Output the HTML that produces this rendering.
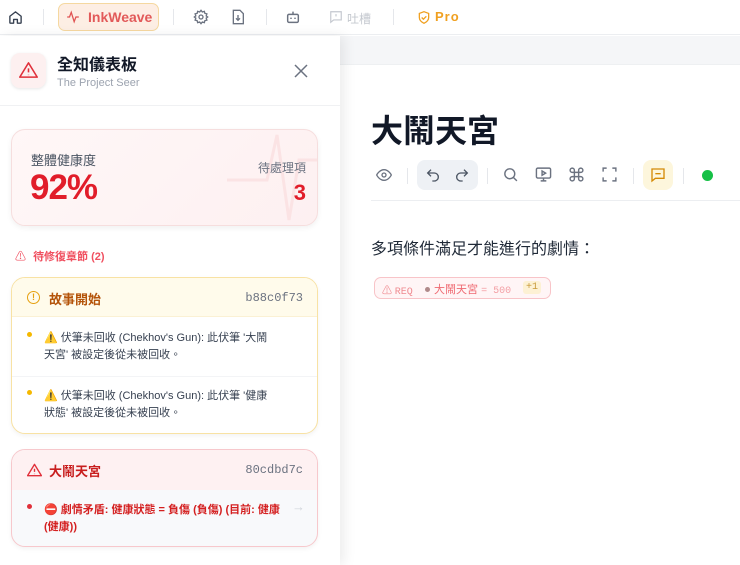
<!DOCTYPE html>
<html><head><meta charset="utf-8"><style>
*{box-sizing:border-box;margin:0;padding:0}
body{width:740px;height:565px;overflow:hidden;background:#fff;font-family:"Liberation Sans","Noto Sans CJK TC",sans-serif;position:relative;color:#1f2937}
.top{position:absolute;left:0;top:0;width:740px;height:35px;background:#fff;border-bottom:1px solid #eceef1}
.ab{position:absolute}
.sep{position:absolute;top:9px;width:1px;height:16px;background:#e5e7eb}
.mono{font-family:"Liberation Mono",monospace}
.right{position:absolute;left:340px;top:36px;right:0;bottom:0;background:#fff}
.strip{position:absolute;left:0;top:0;right:0;height:29px;background:#f5f6f8;border-bottom:1px solid #eef0f2}
.panel{position:absolute;left:0;top:36px;width:340px;height:529px;background:#fff;box-shadow:4px 0 12px rgba(0,0,0,.08);z-index:2}
.card{position:absolute;left:11px;width:307px;border-radius:14px}
</style></head><body>
<div class="top">
 <svg class="ab" style="left:8px;top:10px" width="15" height="15" viewBox="0 0 24 24" fill="none" stroke="#374151" stroke-width="2.2" stroke-linejoin="round"><path d="M3 10l9-7 9 7v10a1 1 0 0 1-1 1h-5v-6h-6v6H4a1 1 0 0 1-1-1z"/></svg>
 <div class="sep" style="left:43px"></div>
 <div class="ab" style="left:58px;top:3px;width:101px;height:28px;border:1px solid #f5d8a0;background:#fdeee4;border-radius:7px"></div>
 <svg class="ab" style="left:66px;top:10px" width="14" height="14" viewBox="0 0 24 24" fill="none" stroke="#e05252" stroke-width="2.2"><path d="M2 12h4l3-8 5 16 3-8h5"/></svg>
 <div class="ab" style="left:88px;top:9px;font-size:14px;font-weight:bold;color:#e25a5a">InkWeave</div>
 <div class="sep" style="left:173px"></div>
 <svg class="ab" style="left:193px;top:9px" width="16" height="16" viewBox="0 0 24 24" fill="none" stroke="#6b7280" stroke-width="2"><circle cx="12" cy="12" r="3"/><path d="M12 2l2 2.5 3-1 .8 3 3 .8-1 3L22 12l-2.2 1.7 1 3-3 .8-.8 3-3-1L12 22l-2-2.5-3 1-.8-3-3-.8 1-3L2 12l2.2-1.7-1-3 3-.8.8-3 3 1z"/></svg>
 <svg class="ab" style="left:231px;top:9px" width="14" height="16" viewBox="0 0 20 24" fill="none" stroke="#6b7280" stroke-width="2"><path d="M3 2h10l5 5v15H3z"/><path d="M10 9v8M7 14l3 3 3-3"/></svg>
 <div class="sep" style="left:266px"></div>
 <svg class="ab" style="left:285px;top:9px" width="16" height="16" viewBox="0 0 24 24" fill="none" stroke="#6b7280" stroke-width="2.2"><rect x="4" y="8" width="16" height="12" rx="2"/><path d="M12 4v4M9 13v2M15 13v2"/></svg>
 <svg class="ab" style="left:329px;top:10px" width="14" height="14" viewBox="0 0 24 24" fill="none" stroke="#c4c8cf" stroke-width="2"><path d="M3 3h18v14H8l-5 4z"/><path d="M12 7v4M12 14v0"/></svg>
 <div class="ab" style="left:347px;top:10px;font-size:12px;color:#c4c8cf">吐槽</div>
 <div class="sep" style="left:393px"></div>
 <svg class="ab" style="left:417px;top:10px" width="14" height="15" viewBox="0 0 24 24" fill="none" stroke="#f0a020" stroke-width="2.2"><path d="M12 2l8 3v7c0 5-4 8-8 10-4-2-8-5-8-10V5z"/><path d="M8 12l3 3 5-5"/></svg>
 <div class="ab" style="left:435px;top:9px;font-size:13px;font-weight:bold;color:#f0a020;letter-spacing:1px">Pro</div>
</div>

<div class="right">
 <div class="strip"></div>
 <div class="ab" style="left:31px;top:70px;font-size:32px;font-weight:bold;color:#111827">大鬧天宮</div>
 <svg class="ab" style="left:36px;top:132px" width="16" height="14" viewBox="0 0 24 20" fill="none" stroke="#6b7280" stroke-width="2"><path d="M1 10s4-8 11-8 11 8 11 8-4 8-11 8S1 10 1 10z"/><circle cx="12" cy="10" r="3"/></svg>
 <div class="sep" style="left:67px;top:132px"></div>
 <div class="ab" style="left:77px;top:124px;width:61px;height:30px;background:#eef1f5;border-radius:8px"></div>
 <svg class="ab" style="left:85px;top:131px" width="16" height="16" viewBox="0 0 24 24" fill="none" stroke="#4b5563" stroke-width="2"><path d="M9 14L4 9l5-5"/><path d="M4 9h10a6 6 0 0 1 0 12h-3"/></svg>
 <svg class="ab" style="left:114px;top:131px" width="16" height="16" viewBox="0 0 24 24" fill="none" stroke="#4b5563" stroke-width="2"><path d="M15 14l5-5-5-5"/><path d="M20 9H10a6 6 0 0 0 0 12h3"/></svg>
 <div class="sep" style="left:147px;top:132px"></div>
 <svg class="ab" style="left:162px;top:130px" width="17" height="17" viewBox="0 0 24 24" fill="none" stroke="#6b7280" stroke-width="2"><circle cx="11" cy="11" r="7"/><path d="M21 21l-5-5"/></svg>
 <svg class="ab" style="left:195px;top:130px" width="17" height="17" viewBox="0 0 24 24" fill="none" stroke="#6b7280" stroke-width="2"><rect x="2" y="3" width="20" height="14" rx="2"/><path d="M10 7l5 3-5 3zM8 21h8M12 17v4"/></svg>
 <svg class="ab" style="left:228px;top:130px" width="17" height="17" viewBox="0 0 24 24" fill="none" stroke="#6b7280" stroke-width="2"><path d="M9 9V6a3 3 0 1 0-3 3h12a3 3 0 1 0-3-3v12a3 3 0 1 0 3-3H6a3 3 0 1 0 3 3z"/></svg>
 <svg class="ab" style="left:261px;top:130px" width="17" height="17" viewBox="0 0 24 24" fill="none" stroke="#6b7280" stroke-width="2"><path d="M3 8V3h5M16 3h5v5M21 16v5h-5M8 21H3v-5"/></svg>
 <div class="sep" style="left:293px;top:132px"></div>
 <div class="ab" style="left:303px;top:124px;width:30px;height:30px;background:#fdf6dc;border-radius:8px"></div>
 <svg class="ab" style="left:310px;top:131px" width="16" height="16" viewBox="0 0 24 24" fill="none" stroke="#d48a06" stroke-width="2"><path d="M3 3h18v14H8l-5 4z"/><path d="M8 10h8"/></svg>
 <div class="sep" style="left:343px;top:132px"></div>
 <div class="ab" style="left:362px;top:134px;width:11px;height:11px;border-radius:50%;background:#16c046"></div>
 <div class="ab" style="left:31px;top:164px;right:0;height:1px;background:#eceef1"></div>
 <div class="ab" style="left:31px;top:199px;font-size:16px;color:#1f2937">多項條件滿足才能進行的劇情：</div>
 <div class="ab" style="left:34px;top:241px;width:177px;height:22px;border:1px solid #f8c4c8;background:#fff5f6;border-radius:7px"></div>
 <div class="ab" style="left:42px;top:246px;font-size:10px;color:#ef8a90"><span>⚠</span> <span class="mono">REQ</span></div>
 <div class="ab" style="left:85px;top:251px;width:5px;height:5px;border-radius:50%;background:#b08a8a"></div>
 <div class="ab" style="left:94px;top:245px;font-size:11px;color:#ef6a72">大鬧天宮 <span class="mono" style="font-size:10px;color:#f3a0a5">= 500</span></div>
 <div class="ab mono" style="left:183px;top:245px;font-size:10px;color:#c99a3a;background:#fdf1d4;padding:1px 3px;border-radius:3px">+1</div>
</div>

<div class="panel">
 <div class="ab" style="left:11px;top:17px;width:35px;height:35px;border-radius:9px;background:#fdf0f0;box-shadow:0 1px 3px rgba(0,0,0,.1)"></div>
 <svg class="ab" style="left:19px;top:25px" width="19" height="18" viewBox="0 0 24 22" fill="none" stroke="#e0303a" stroke-width="2" stroke-linejoin="round"><path d="M12 2L1 20h22z"/><path d="M12 9v5M12 17v.5"/></svg>
 <div class="ab" style="left:57px;top:15px;font-size:16px;font-weight:bold;color:#111827">全知儀表板</div>
 <div class="ab" style="left:57px;top:41px;font-size:11px;color:#9ca3af">The Project Seer</div>
 <svg class="ab" style="left:294px;top:28px" width="14" height="14" viewBox="0 0 14 14" stroke="#6b7280" stroke-width="1.5"><path d="M1 1l12 12M13 1L1 13"/></svg>
 <div class="ab" style="left:0;top:69px;width:340px;height:1px;background:#f0f1f3"></div>
 <div class="card" style="top:93px;height:97px;background:linear-gradient(135deg,#fff7f7,#fdf0f1);border:1px solid #f6dede;box-shadow:0 2px 6px rgba(0,0,0,.06)">
  <svg class="ab" style="left:215px;top:0" width="90" height="95" viewBox="0 0 90 95" fill="none" stroke="#fbe3e4" stroke-width="3"><path d="M0 50h40l10-45 12 85 10-60h18"/></svg>
  <div class="ab" style="left:19px;top:20px;font-size:13px;color:#4b5563">整體健康度</div>
  <div class="ab" style="left:18px;top:38px;font-size:35px;font-weight:bold;color:#e11d2a;letter-spacing:-1px">92%</div>
  <div class="ab" style="right:11px;top:29px;font-size:12px;color:#6b7280">待處理項</div>
  <div class="ab" style="right:11px;top:50px;font-size:22px;font-weight:bold;color:#e11d2a">3</div>
 </div>
 <div class="ab" style="left:15px;top:212px;font-size:11px;color:#f05060">⚠ <span style="margin-left:4px;font-weight:bold">待修復章節 (2)</span></div>
 <div class="card" style="top:241px;height:157px;background:#fff;border:1px solid #f8e2a4;overflow:hidden;box-shadow:0 2px 5px rgba(0,0,0,.05)">
  <div class="ab" style="left:0;top:0;right:0;height:39px;background:#fffbeb;border-bottom:1px solid #fbf1d4"></div>
  <div class="ab" style="left:15px;top:13px;width:13px;height:13px;border:1.6px solid #e6a010;border-radius:50%;font-size:9px;color:#e6a010;text-align:center;line-height:10px;font-weight:bold">!</div>
  <div class="ab" style="left:37px;top:11px;font-size:13px;font-weight:bold;color:#b45309">故事開始</div>
  <div class="ab mono" style="right:14px;top:13px;font-size:12px;color:#6b7280">b88c0f73</div>
  <div class="ab" style="left:15px;top:54px;width:5px;height:5px;border-radius:50%;background:#f5b800"></div>
  <div class="ab" style="left:32px;top:52px;width:232px;font-size:11px;line-height:17px;color:#374151">⚠️ 伏筆未回收 (Chekhov's Gun): 此伏筆 '大鬧天宮' 被設定後從未被回收。</div>
  <div class="ab" style="left:0;top:98px;right:0;height:1px;background:#f3f4f6"></div>
  <div class="ab" style="left:15px;top:112px;width:5px;height:5px;border-radius:50%;background:#f5b800"></div>
  <div class="ab" style="left:32px;top:110px;width:232px;font-size:11px;line-height:17px;color:#374151">⚠️ 伏筆未回收 (Chekhov's Gun): 此伏筆 '健康狀態' 被設定後從未被回收。</div>
 </div>
 <div class="card" style="top:413px;height:98px;background:#f8f9fb;border:1px solid #f7c8cc;overflow:hidden;box-shadow:0 2px 5px rgba(0,0,0,.05)">
  <div class="ab" style="left:0;top:0;right:0;height:40px;background:#fef1f2"></div>
  <svg class="ab" style="left:15px;top:13px" width="15" height="14" viewBox="0 0 24 22" fill="none" stroke="#e0303a" stroke-width="2.2" stroke-linejoin="round"><path d="M12 2L1 20h22z"/><path d="M12 9v5M12 17v.5"/></svg>
  <div class="ab" style="left:37px;top:11px;font-size:13px;font-weight:bold;color:#c81e1e">大鬧天宮</div>
  <div class="ab mono" style="right:14px;top:13px;font-size:12px;color:#6b7280">80cdbd7c</div>
  <div class="ab" style="left:15px;top:54px;width:5px;height:5px;border-radius:50%;background:#e0303a"></div>
  <div class="ab" style="left:32px;top:52px;width:240px;font-size:11px;line-height:17px;color:#d42020;font-weight:bold">⛔ 劇情矛盾: 健康狀態 = 負傷 (負傷) (目前: 健康(健康))</div>
  <div class="ab" style="left:280px;top:49px;font-size:13px;color:#d1d5db">→</div>
 </div>
</div>
</body></html>
